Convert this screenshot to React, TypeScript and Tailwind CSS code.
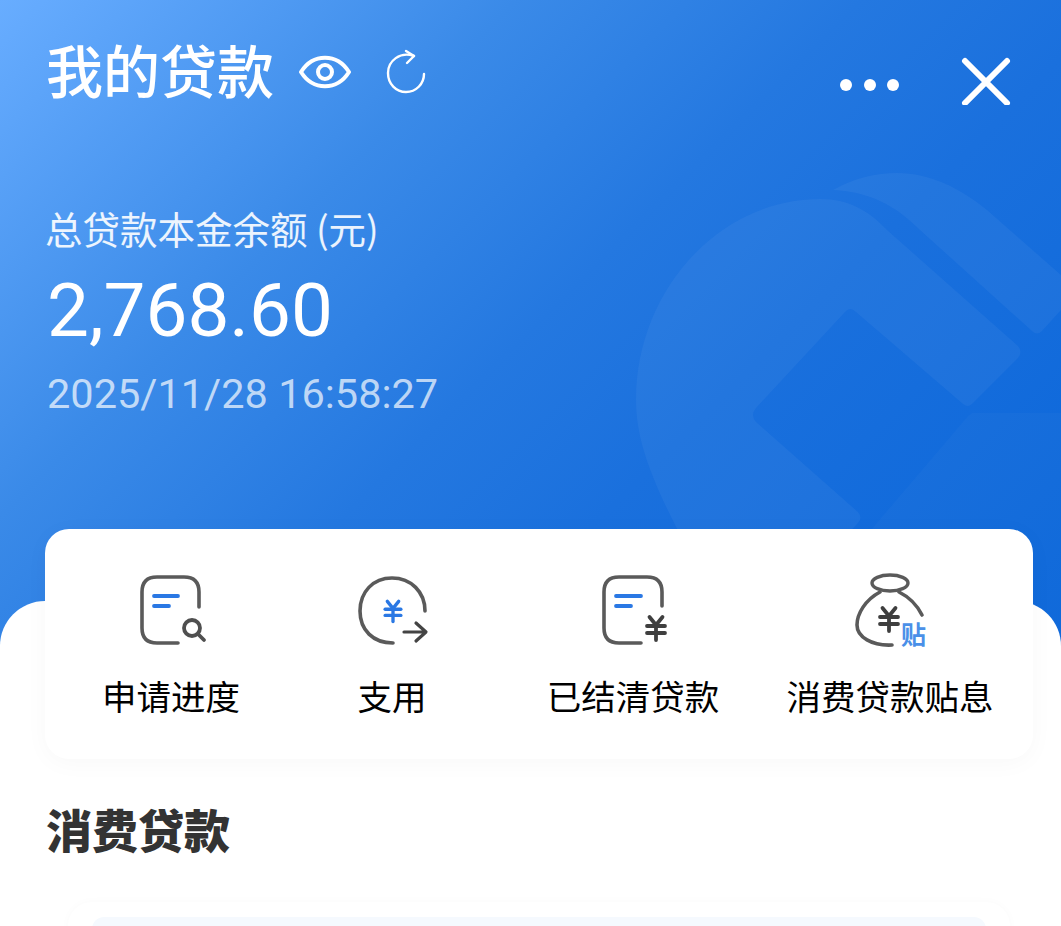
const actions = [
  { label: '申请进度', icon: <ProgressIcon /> },
  { label: '支用', icon: <DrawIcon /> },
  { label: '已结清贷款', icon: <SettledIcon /> },
  { label: '消费贷款贴息', icon: <SubsidyIcon /> },
];

function Yen({ x, y, color, h = 24 }: { x: number; y: number; color: string; h?: number }) {
  const s = h / 24;
  return (
    <g stroke={color} strokeWidth={3.8} strokeLinecap="round" strokeLinejoin="round" fill="none" transform={`translate(${x} ${y}) scale(${s})`}>
      <path d="M-6.5 -11 L0 -3 L6.5 -11" />
      <path d="M-9 -2 H9" />
      <path d="M-9 5 H9" />
      <path d="M0 -3 V12" />
    </g>
  );
}

function ProgressIcon() {
  return (
    <svg width="76" height="76" viewBox="133 572 76 76" fill="none" strokeLinecap="round">
      <path d="M199 607 V592 C199 582 194 577 184 577 H157 C147 577 142 582 142 592 V628 C142 638 147 643 157 643 H178" stroke="#5a5a5a" strokeWidth="3.6" />
      <path d="M154 596 H178" stroke="#2a78e4" strokeWidth="3.8" />
      <path d="M154 606 H169" stroke="#2a78e4" strokeWidth="3.8" />
      <circle cx="192" cy="628" r="8" stroke="#4f4f4f" strokeWidth="3.8" />
      <path d="M198 634 L204 640" stroke="#4f4f4f" strokeWidth="3.8" />
    </svg>
  );
}

function DrawIcon() {
  return (
    <svg width="76" height="76" viewBox="354 572 76 76" fill="none" strokeLinecap="round" strokeLinejoin="round">
      <path d="M425 611 C425 592 411 578 392 578 C373 578 360 592 360 611 C360 630 373 643 393 643" stroke="#5a5a5a" strokeWidth="3.6" />
      <Yen x={393} y={611} color="#2a78e4" h={21} />
      <path d="M404 632 H425 M416 623 L426 632 L416 641" stroke="#444444" strokeWidth="3.2" />
    </svg>
  );
}

function SettledIcon() {
  return (
    <svg width="76" height="76" viewBox="595 572 76 76" fill="none" strokeLinecap="round">
      <path d="M662 606 V592 C662 582 657 577 647 577 H619 C609 577 604 582 604 592 V628 C604 638 609 643 619 643 H641" stroke="#5a5a5a" strokeWidth="3.6" />
      <path d="M616 596 H641" stroke="#2a78e4" strokeWidth="3.8" />
      <path d="M616 606 H631" stroke="#2a78e4" strokeWidth="3.8" />
      <Yen x={656} y={628} color="#3f3f3f" />
    </svg>
  );
}

function SubsidyIcon() {
  return (
    <svg className="-mb-[6px]" width="76" height="82" viewBox="852 572 76 82" fill="none" strokeLinecap="round">
      <ellipse cx="890" cy="583" rx="18" ry="8" stroke="#5a5a5a" strokeWidth="3.4" />
      <path d="M880 592 C865 600 857 614 857 625 C857 637 872 646 892 645" stroke="#5a5a5a" strokeWidth="3.6" />
      <path d="M899 592 C909 597 917 605 922 615" stroke="#5a5a5a" strokeWidth="3.6" />
      <Yen x={889} y={619} color="#3f3f3f" />
      <text x="901" y="644" fontSize="25" fontWeight="700" fill="#4a90e8" fontFamily="'Noto Sans CJK SC', sans-serif">贴</text>
    </svg>
  );
}

function Watermark() {
  return (
    <svg className="absolute left-0 top-0 w-[1061px] h-[660px]" viewBox="0 0 1061 660" fill="#ffffff">
      <path opacity="0.045" d="M1018 346 Q1023 352 1018 358 L972 404 Q968 408 963 404 L856 312 Q850 306 845 312 L756 408 Q750 415 756 422 L858 512 Q863 518 858 523 L730 660 L715 600 C660 500 636 450 636 400 C636 290 720 199 820 199 C850 199 870 212 887 230 Z" />
      <path opacity="0.045" d="M833 190 C855 178 875 173 897 173 C930 173 960 188 987 210 L1061 275 V310 L1042 331 Q1037 336 1032 331 L920 230 C895 205 870 192 833 190 Z" />
      <path opacity="0.025" d="M972 413 H1061 V660 H760 L968 416 Z" />
    </svg>
  );
}

export default function App() {
  return (
    <div className="relative w-[1061px] h-[926px] overflow-hidden bg-white font-['Noto_Sans_CJK_SC',sans-serif]">
      <div className="relative h-[660px] pt-[35px] bg-[linear-gradient(135deg,#68adff_0%,#3a8ae8_30%,#2478e0_50%,#1a70dd_65%,#0a66da_100%)] text-white">
        <Watermark />
        <div className="relative flex items-center justify-between h-[70px] pl-[47px] pr-[50px]">
          <div className="flex items-center">
            <span className="-ml-[1px] -mt-[4px] text-[57px] leading-[70px] font-medium">我的贷款</span>
            <svg className="ml-[25px]" width="52" height="70" viewBox="0 0 52 70" fill="none" stroke="#ffffff">
              <path d="M2 37 C14 18 38 18 50 37 C38 56 14 56 2 37 Z" strokeWidth="4" strokeLinejoin="round" />
              <circle cx="26" cy="37" r="7" strokeWidth="4" />
            </svg>
            <svg className="ml-[35px]" width="40" height="70" viewBox="0 0 40 70" fill="none" stroke="#ffffff" strokeWidth="2.4" strokeLinecap="round" strokeLinejoin="round">
              <path d="M28 21 C14 16 2 26 2 38 C2 49 10 57 20 57 C30 57 38 49 38 39" />
              <path d="M20 16 L28 21 L21 28" />
            </svg>
          </div>
          <div className="flex items-center">
            <svg width="60" height="70" viewBox="0 0 60 70" fill="#ffffff">
              <circle cx="6" cy="50" r="6" />
              <circle cx="30" cy="50" r="6" />
              <circle cx="53" cy="50" r="6" />
            </svg>
            <svg className="ml-[60px]" width="51" height="70" viewBox="0 0 51 70" stroke="#ffffff" strokeWidth="6" strokeLinecap="round">
              <path d="M5 26 L47 68 M47 26 L5 68" />
            </svg>
          </div>
        </div>
        <div className="relative pl-[47px] pt-[98px]">
          <div className="-ml-[2px] text-[37.5px] leading-[50px] text-white/90">总贷款本金余额 (元)</div>
          <div className="mt-[13px] text-[74.6px] leading-[90px] font-['Roboto',sans-serif]">2,768.60</div>
          <div className="mt-[13px] text-[41.5px] leading-[50px] text-white/70 font-['Roboto',sans-serif]">2025/11/28 16:58:27</div>
        </div>
      </div>

      <div className="relative -mt-[59px] h-[325px] rounded-t-[45px] bg-white">
        <div className="relative -top-[72px] ml-[45px] w-[988px] h-[230px] rounded-[24px] bg-white shadow-[0_4px_24px_rgba(0,0,0,0.03)] pt-[43px] grid grid-cols-[252px_190px_292px_222px]">
          {actions.map((a) => (
            <div key={a.label} className="flex flex-col items-center">
              {a.icon}
              <span className="mt-[27px] text-[34.5px] leading-[40px] text-black whitespace-nowrap">{a.label}</span>
            </div>
          ))}
        </div>
        <h2 className="-mt-[33px] ml-[46px] text-[46px] leading-[60px] font-black text-[#333333]">消费贷款</h2>
        <div className="mt-[44px] ml-[68px] mr-[51px] h-[60px] rounded-t-[24px] bg-white shadow-[0_0_10px_rgba(0,0,0,0.025)] pt-[15px] px-[24px]">
          <div className="h-[40px] rounded-t-[12px] bg-[#f5f9fe]" />
        </div>
      </div>
    </div>
  );
}
